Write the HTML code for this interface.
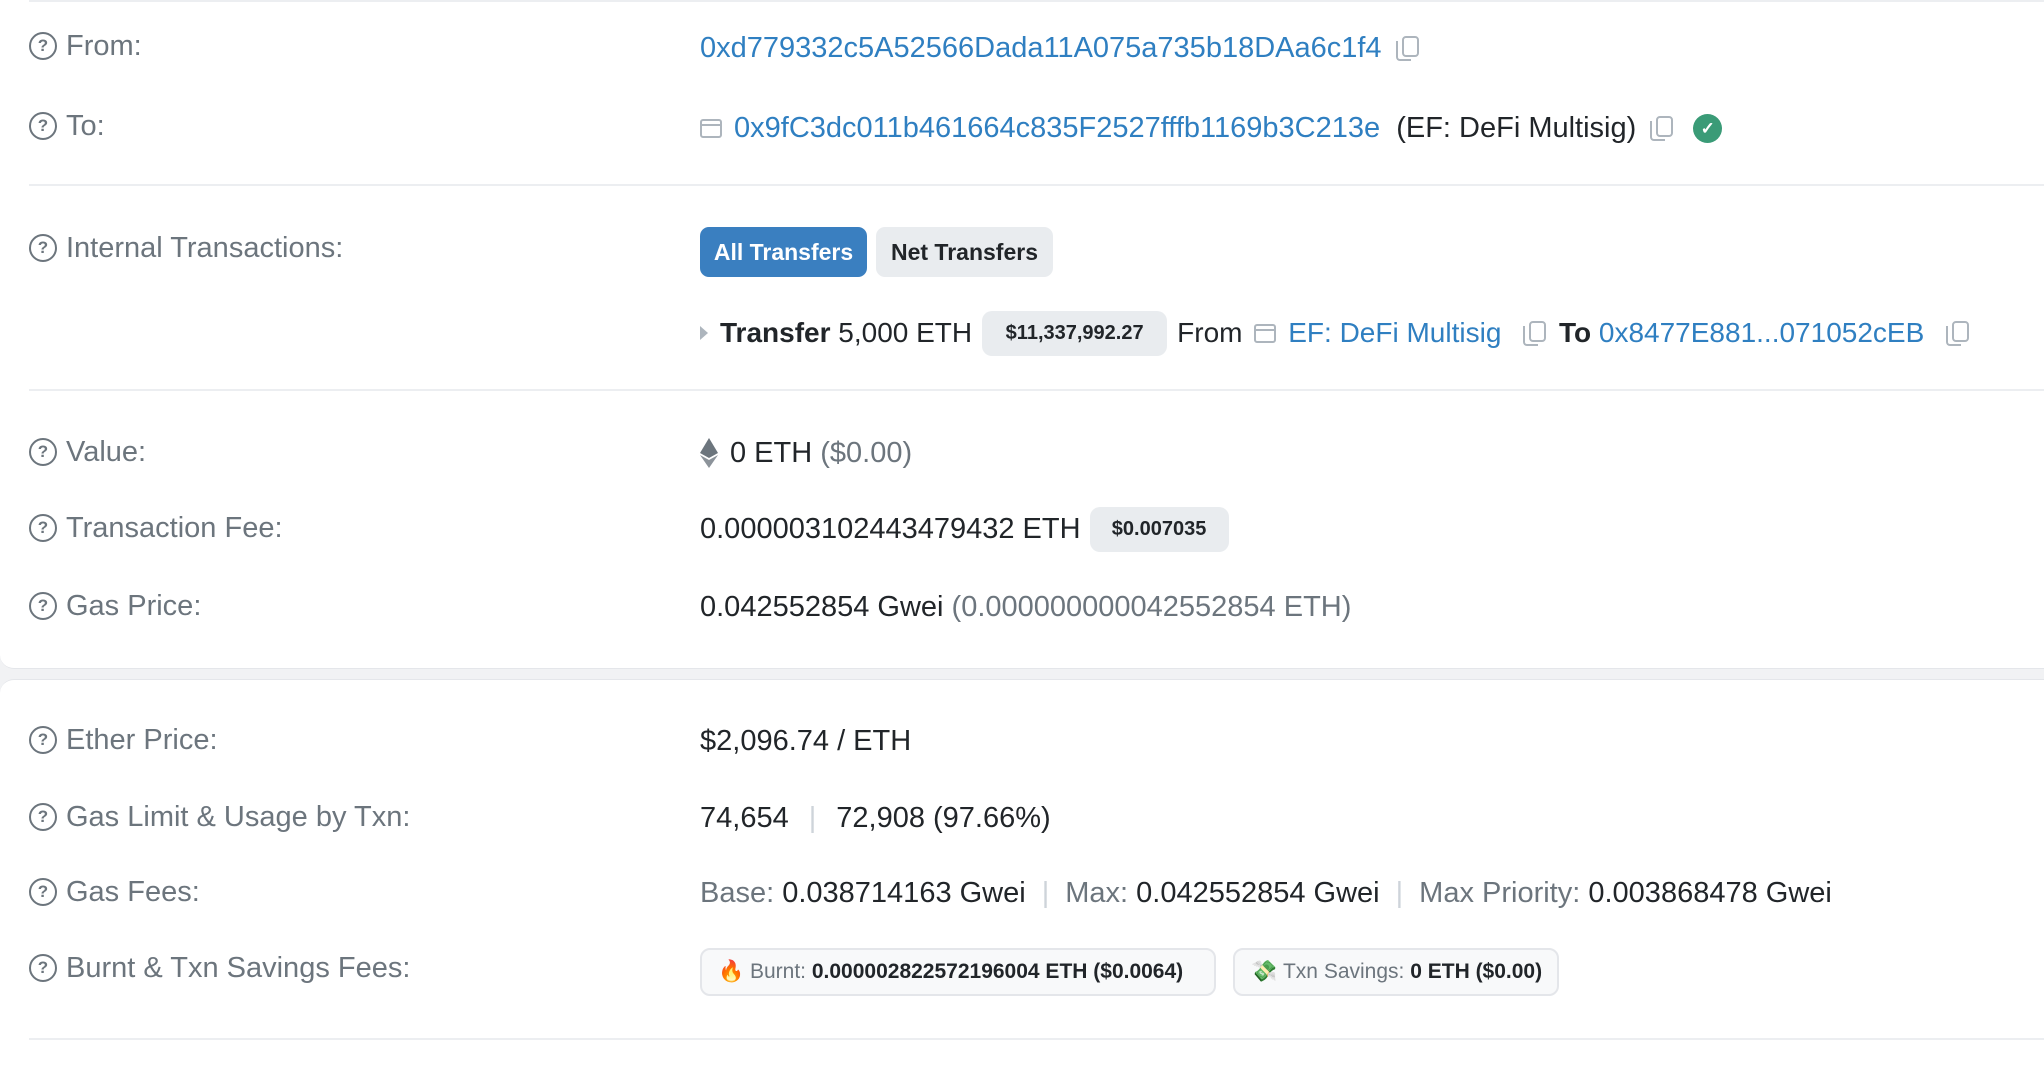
<!DOCTYPE html>
<html><head><meta charset="utf-8"><style>
*{margin:0;padding:0;box-sizing:border-box}
body{width:2044px;height:1062px;background:#f1f2f4;font-family:"Liberation Sans",Arial,sans-serif;font-size:29px;color:#212529;position:relative;overflow:hidden}
.card{position:absolute;background:#fff;left:0;width:2060px}
.c1{top:-20px;height:689px;border-radius:0 0 0 14px;border-bottom:1px solid #e4e6ea}
.c2{top:679px;height:400px;border-radius:14px 0 0 0;border-top:1px solid #e4e6ea}
.hr{position:absolute;left:29px;right:0;height:2px;background:#eceef1}
.row{position:absolute;height:44px;display:flex;align-items:center;white-space:nowrap}
.lab{left:29px;color:#6c757d}
.val{left:700px}
.q{display:inline-block;width:28px;height:28px;border:2.5px solid #6c757d;border-radius:50%;font-size:17px;font-weight:bold;text-align:center;line-height:23px;margin-right:9px;color:#6c757d}
.a{color:#2f7fc1}
.g{color:#6c757d}
.b{font-weight:bold}
.badge{background:#e9ecef;border-radius:10px;font-weight:bold;font-size:20px;display:inline-flex;align-items:center;justify-content:center}
.copy{display:inline-block;width:20px;height:24px;position:relative;margin-left:14px}
.copy:before{content:"";position:absolute;left:6px;top:0;width:13px;height:17px;border:2px solid #adb5bd;border-radius:4px}
.copy:after{content:"";position:absolute;left:0;top:5px;width:13px;height:18px;border-left:2px solid #adb5bd;border-bottom:2px solid #adb5bd;border-radius:0 0 0 4px}
.wal{display:inline-block;width:22px;height:19px;border:2px solid #adb5bd;border-radius:3px;margin-right:12px;position:relative}
.wal:after{content:"";position:absolute;left:-2px;right:-2px;top:3px;border-top:2px solid #adb5bd}
.pill{position:absolute;height:48px;border:2px solid #e4e6ea;background:#f8f9fa;border-radius:10px;display:flex;align-items:center;font-size:21px;padding-left:16px;white-space:nowrap}
</style></head><body>
<div class="card c1"></div>
<div class="card c2"></div>
<div class="hr" style="top:0;height:2px"></div>

<div class="row lab" style="top:24px"><span class="q">?</span>From:</div>
<div class="row val" style="top:26px"><span class="a">0xd779332c5A52566Dada11A075a735b18DAa6c1f4</span><span class="copy"></span></div>

<div class="row lab" style="top:104px"><span class="q">?</span>To:</div>
<div class="row val" style="top:106px"><span class="wal"></span><span class="a">0x9fC3dc011b461664c835F2527fffb1169b3C213e</span>&nbsp;&nbsp;(EF: DeFi Multisig)<span class="copy"></span><span style="display:inline-block;width:29px;height:29px;border-radius:50%;background:#3a9b77;color:#fff;font-size:17px;text-align:center;line-height:29px;margin-left:23px;font-weight:bold">✓</span></div>

<div class="hr" style="top:184px"></div>

<div class="row lab" style="top:226px"><span class="q">?</span>Internal Transactions:</div>
<div style="position:absolute;left:700px;top:227px;width:167px;height:50px;background:#3a7fc0;border-radius:9px;color:#fff;font-weight:bold;font-size:23px;display:flex;align-items:center;justify-content:center">All Transfers</div>
<div style="position:absolute;left:876px;top:227px;width:177px;height:50px;background:#e9ecef;border-radius:9px;color:#212529;font-weight:bold;font-size:23px;display:flex;align-items:center;justify-content:center">Net Transfers</div>

<div class="row val" style="top:311px;font-size:28px"><span style="display:inline-block;border-left:8px solid #adb5bd;border-top:7px solid transparent;border-bottom:7px solid transparent;margin-right:12px"></span><span class="b">Transfer</span>&nbsp;5,000 ETH<span class="badge" style="width:185px;height:45px;margin:0 10px">$11,337,992.27</span>From&nbsp;<span class="wal" style="margin-left:4px"></span><span class="a">EF: DeFi Multisig</span><span class="copy" style="margin-left:22px"></span>&nbsp;&nbsp;<span class="b">To</span>&nbsp;<span class="a">0x8477E881...071052cEB</span><span class="copy" style="margin-left:22px"></span></div>

<div class="hr" style="top:389px"></div>

<div class="row lab" style="top:430px"><span class="q">?</span>Value:</div>
<div class="row val" style="top:431px"><svg width="18" height="30" viewBox="0 0 18 30" style="margin-right:12px"><path d="M9 0L0 15l9 5 9-5z" fill="#6c757d"/><path d="M0 17l9 13 9-13-9 5z" fill="#8c939a"/></svg>0 ETH&nbsp;<span class="g">($0.00)</span></div>

<div class="row lab" style="top:506px"><span class="q">?</span>Transaction Fee:</div>
<div class="row val" style="top:507px">0.000003102443479432 ETH<span class="badge" style="width:139px;height:45px;margin-left:9px">$0.007035</span></div>

<div class="row lab" style="top:584px"><span class="q">?</span>Gas Price:</div>
<div class="row val" style="top:585px">0.042552854 Gwei&nbsp;<span class="g">(0.000000000042552854 ETH)</span></div>

<div class="row lab" style="top:718px"><span class="q">?</span>Ether Price:</div>
<div class="row val" style="top:719px">$2,096.74 / ETH</div>

<div class="row lab" style="top:795px"><span class="q">?</span>Gas Limit &amp; Usage by Txn:</div>
<div class="row val" style="top:796px">74,654<span style="color:#ced4da;margin:0 20px">|</span>72,908 (97.66%)</div>

<div class="row lab" style="top:870px"><span class="q">?</span>Gas Fees:</div>
<div class="row val" style="top:871px"><span class="g">Base:</span>&nbsp;0.038714163 Gwei<span style="color:#ced4da;margin:0 16px">|</span><span class="g">Max:</span>&nbsp;0.042552854 Gwei<span style="color:#ced4da;margin:0 16px">|</span><span class="g">Max Priority:</span>&nbsp;0.003868478 Gwei</div>

<div class="row lab" style="top:946px"><span class="q">?</span>Burnt &amp; Txn Savings Fees:</div>
<div class="pill" style="left:700px;top:948px;width:516px">🔥&nbsp;<span class="g">Burnt:</span>&nbsp;<span class="b">0.000002822572196004 ETH ($0.0064)</span></div>
<div class="pill" style="left:1233px;top:948px;width:326px">💸&nbsp;<span class="g">Txn Savings:</span>&nbsp;<span class="b">0 ETH ($0.00)</span></div>

<div class="hr" style="top:1038px"></div>
</body></html>
